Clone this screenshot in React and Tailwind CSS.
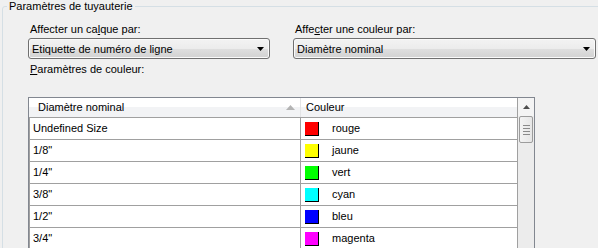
const rows = [
  { size: "Undefined Size", swatch: "bg-[#ff0000]", name: "rouge" },
  { size: '1/8"', swatch: "bg-[#ffff00]", name: "jaune" },
  { size: '1/4"', swatch: "bg-[#00ff00]", name: "vert" },
  { size: '3/8"', swatch: "bg-[#00ffff]", name: "cyan" },
  { size: '1/2"', swatch: "bg-[#0000ff]", name: "bleu" },
  { size: '3/4"', swatch: "bg-[#ff00ff]", name: "magenta" },
];

function ComboBox({ value }) {
  return (
    <div className="h-[21px] flex items-center justify-between border border-[#707070] rounded-[3px] bg-[linear-gradient(to_bottom,#f3f3f3_0%,#ececec_50%,#dfdfdf_50%,#d2d2d2_100%)] shadow-[inset_0_0_0_1px_#fafafa] pl-[3px] pr-[5px]">
      <span className="leading-[13px] pt-[1px]">{value}</span>
      <svg width="7" height="4" viewBox="0 0 7 4">
        <polygon points="0,0 7,0 3.5,4" fill="#000" />
      </svg>
    </div>
  );
}

function ScrollBar() {
  return (
    <div className="w-[17px] flex flex-col bg-[#ececec] border-l border-[#a0a0a0]">
      <div className="h-[18px] flex items-center justify-center bg-[#f4f4f4]">
        <svg width="7" height="4" viewBox="0 0 7 4">
          <polygon points="3.5,0 7,4 0,4" fill="#4d4d4d" />
        </svg>
      </div>
      <div className="mx-[1px] h-[27px] flex flex-col items-center justify-center gap-[2px] border border-[#9c9c9c] rounded-[2px] bg-[linear-gradient(to_right,#f3f3f3,#e6e6e6)]">
        <div className="w-[7px] h-[1px] bg-[#8a8a8a]" />
        <div className="w-[7px] h-[1px] bg-[#8a8a8a]" />
        <div className="w-[7px] h-[1px] bg-[#8a8a8a]" />
        <div className="w-[7px] h-[1px] bg-[#8a8a8a]" />
      </div>
      <div className="flex-1" />
    </div>
  );
}

export default function App() {
  return (
    <div className="w-[598px] h-[248px] overflow-hidden bg-[#f0f0f0] text-[11px] text-black font-['Liberation_Sans',Arial,sans-serif]">
      <fieldset className="ml-[2px] w-[640px] h-[300px] border border-[#d5dfe5] rounded-[3px]">
        <legend className="ml-[4px] px-[2px] leading-[13px]">Paramètres de tuyauterie</legend>

        <div className="pl-[25px] pt-[10px]">
          <div className="grid grid-cols-[242px_303px] gap-x-[23px]">
            <div>
              <p className="pl-[2px] leading-[13px]">
                Affecter un ca<span className="underline">l</span>que par:
              </p>
              <div className="mt-[2px]">
                <ComboBox value="Etiquette de numéro de ligne" />
              </div>
            </div>
            <div>
              <p className="pl-[2px] leading-[13px]">
                Affe<span className="underline">c</span>ter une couleur par:
              </p>
              <div className="mt-[2px]">
                <ComboBox value="Diamètre nominal" />
              </div>
            </div>
          </div>

          <p className="pl-[2px] mt-[4px] leading-[13px]">
            <span className="underline">P</span>aramètres de couleur:
          </p>

          <div className="mt-[21px] w-[507px] flex border-l border-t border-r border-[#828790] bg-white">
            <div className="flex-1 flex flex-col">
              <div className="h-[20px] flex border-b border-[#a0a0a0] bg-[linear-gradient(to_bottom,#ffffff_0%,#ffffff_45%,#f2f3f5_45%,#f2f3f5_100%)]">
                <div className="w-[272px] flex items-center justify-between pl-[9px] pr-[5px] border-r border-[#e3e4e6]">
                  <span className="leading-[13px]">Diamètre nominal</span>
                  <svg width="9" height="5" viewBox="0 0 9 5">
                    <polygon points="4.5,0 9,5 0,5" fill="#b4b4b4" />
                  </svg>
                </div>
                <div className="flex-1 flex items-center pl-[5px]">
                  <span className="leading-[13px]">Couleur</span>
                </div>
              </div>

              {rows.map((row) => (
                <div key={row.name} className="h-[22px] flex border-b border-[#a0a0a0] border-l">
                  <div className="w-[271px] flex items-center pl-[3px] border-r border-[#a0a0a0]">
                    <span className="leading-[13px]">{row.size}</span>
                  </div>
                  <div className="flex-1 flex items-center pl-[4px]">
                    <div className={`w-[14px] h-[14px] border-r border-b border-black ${row.swatch}`} />
                    <span className="ml-[13px] leading-[13px]">{row.name}</span>
                  </div>
                </div>
              ))}
            </div>
            <ScrollBar />
          </div>
        </div>
      </fieldset>
    </div>
  );
}
